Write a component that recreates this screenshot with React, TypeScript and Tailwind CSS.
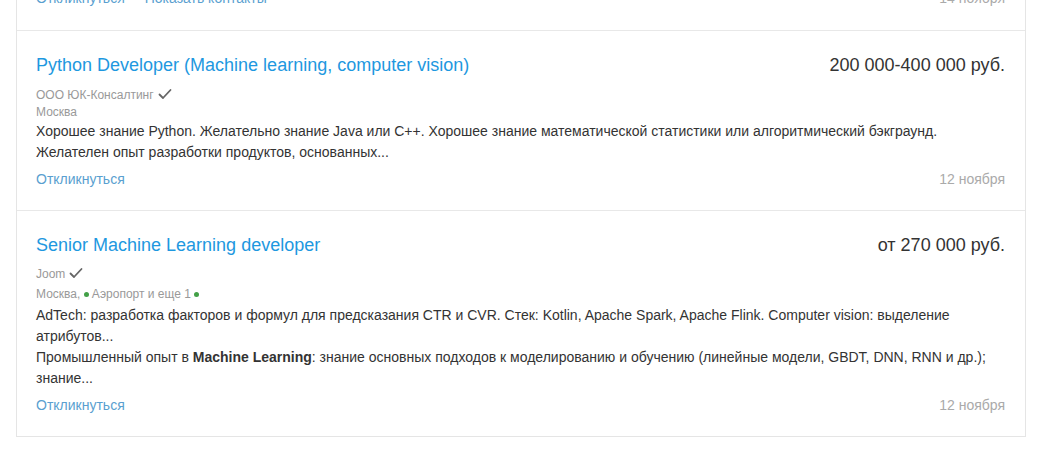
import React from "react";

const Check = () => (
  <svg width="14" height="12" viewBox="0 0 14 12" className="inline-block ml-[4px] align-[-1px]">
    <polyline points="1.5,6.5 5,10 12.5,2" fill="none" stroke="#666" strokeWidth="1.8" strokeLinecap="round" strokeLinejoin="round" />
  </svg>
);

const Dot = () => (
  <span className="inline-block w-[5px] h-[5px] rounded-full bg-[#43a047] mr-[3px] align-[1px]" />
);

export default function App() {
  return (
    <div className="bg-white w-[1044px] h-[453px] overflow-hidden" style={{ fontFamily: '"Liberation Sans", Arial, sans-serif' }}>
      <div className="ml-[16px] w-[1010px] -mt-[12px] border-x border-b border-[#e5e5e5]">
        {/* partial previous item */}
        <div className="pl-[19px] pr-[20px] pb-[21px] border-b border-[#e8e8e8] flex justify-between text-[14px] leading-[21px]">
          <div className="flex gap-[20px] text-[#5a9fd0]">
            <span>Откликнуться</span>
            <span>Показать контакты</span>
          </div>
          <span className="text-[#aaa]">14 ноября</span>
        </div>

        {/* item 1 */}
        <div className="pl-[19px] pr-[20px] pt-[22px] pb-[20px] border-b border-[#e8e8e8]">
          <div className="flex justify-between text-[18px] leading-[24px]">
            <span className="text-[#1e98e0]">Python Developer (Machine learning, computer vision)</span>
            <span className="text-[#333]">200 000-400 000 руб.</span>
          </div>
          <div className="mt-[9px] text-[12px] leading-[18px] text-[#999]">
            ООО ЮК-Консалтинг<Check />
          </div>
          <div className="text-[12px] leading-[17px] text-[#999]">Москва</div>
          <div className="text-[14px] leading-[21px] text-[#333]">
            Хорошее знание Python. Желательно знание Java или C++. Хорошее знание математической статистики или алгоритмический бэкграунд. Желателен опыт разработки продуктов, основанных...
          </div>
          <div className="mt-[6px] flex justify-between text-[14px] leading-[21px]">
            <span className="text-[#5a9fd0]">Откликнуться</span>
            <span className="text-[#aaa]">12 ноября</span>
          </div>
        </div>

        {/* item 2 */}
        <div className="pl-[19px] pr-[20px] pt-[22px] pb-[20px]">
          <div className="flex justify-between text-[18px] leading-[24px]">
            <span className="text-[#1e98e0]">Senior Machine Learning developer</span>
            <span className="text-[#333]">от 270 000 руб.</span>
          </div>
          <div className="mt-[8px] text-[12px] leading-[18px] text-[#999]">
            Joom<Check />
          </div>
          <div className="pt-[1px] text-[12px] leading-[21px] text-[#999]">
            Москва, <Dot />Аэропорт и еще 1 <Dot />
          </div>
          <div className="text-[14px] leading-[21px] text-[#333]">
            <p>AdTech: разработка факторов и формул для предсказания CTR и CVR. Стек: Kotlin, Apache Spark, Apache Flink. Computer vision: выделение атрибутов...</p>
            <p>
              Промышленный опыт в <b className="text-[#333]">Machine Learning</b>: знание основных подходов к моделированию и обучению (линейные модели, GBDT, DNN, RNN и др.); знание...
            </p>
          </div>
          <div className="mt-[6px] flex justify-between text-[14px] leading-[21px]">
            <span className="text-[#5a9fd0]">Откликнуться</span>
            <span className="text-[#aaa]">12 ноября</span>
          </div>
        </div>
      </div>
    </div>
  );
}
